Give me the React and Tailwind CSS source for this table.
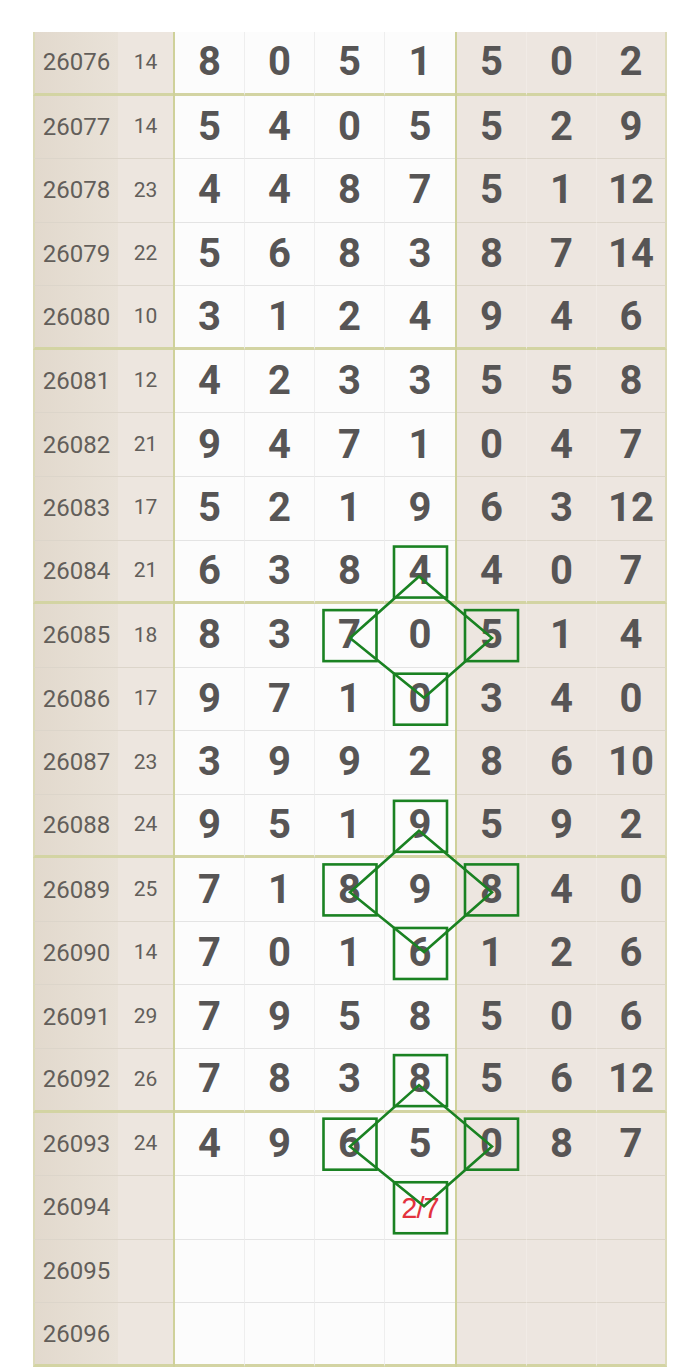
import React from "react";

const rows = [
  ["26076", "14", [8, 0, 5, 1], [5, 0, 2]],
  ["26077", "14", [5, 4, 0, 5], [5, 2, 9]],
  ["26078", "23", [4, 4, 8, 7], [5, 1, 12]],
  ["26079", "22", [5, 6, 8, 3], [8, 7, 14]],
  ["26080", "10", [3, 1, 2, 4], [9, 4, 6]],
  ["26081", "12", [4, 2, 3, 3], [5, 5, 8]],
  ["26082", "21", [9, 4, 7, 1], [0, 4, 7]],
  ["26083", "17", [5, 2, 1, 9], [6, 3, 12]],
  ["26084", "21", [6, 3, 8, 4], [4, 0, 7]],
  ["26085", "18", [8, 3, 7, 0], [5, 1, 4]],
  ["26086", "17", [9, 7, 1, 0], [3, 4, 0]],
  ["26087", "23", [3, 9, 9, 2], [8, 6, 10]],
  ["26088", "24", [9, 5, 1, 9], [5, 9, 2]],
  ["26089", "25", [7, 1, 8, 9], [8, 4, 0]],
  ["26090", "14", [7, 0, 1, 6], [1, 2, 6]],
  ["26091", "29", [7, 9, 5, 8], [5, 0, 6]],
  ["26092", "26", [7, 8, 3, 8], [5, 6, 12]],
  ["26093", "24", [4, 9, 6, 5], [0, 8, 7]],
  ["26094", "", null, null],
  ["26095", "", null, null],
  ["26096", "", null, null],
];

const groupEnds = ["26076", "26080", "26084", "26088", "26092", "26096"];

const ROW_H = 63.57;
const TOP = 32;

// centre rows of the green diamonds (index into rows)
const diamonds = [9, 13, 17];

const Row = ({ period, sum, left, right }) => {
  const end = groupEnds.includes(period);
  const beigeLine = end ? "border-b-[3px] border-[#d3d4a3]" : "border-b border-[#dcd5ca]";
  const whiteLine = end ? "border-b-[3px] border-[#d3d4a3]" : "border-b border-[#e4e4e4]";
  return (
    <div className="flex h-[63.57px]">
      <div
        className={`w-[85px] flex items-center justify-center border-l-2 border-l-[#dcdab8] bg-gradient-to-r from-[#e2d9cd] to-[#e9e2d8] text-[24px] text-[#625e5a] ${beigeLine}`}
      >
        {period}
      </div>
      <div className={`w-[55px] flex items-center justify-center bg-[#ede6df] text-[21px] text-[#625e5a] ${beigeLine}`}>
        {sum}
      </div>
      <div className="w-[2px] bg-[#cfd19a]" />
      {[0, 1, 2, 3].map((c) => (
        <div
          key={c}
          className={`w-[70px] flex items-center justify-center bg-[#fcfcfc] text-[40px] font-bold text-[#575555] ${c < 3 ? "border-r border-r-[#eeeeee]" : ""} ${whiteLine}`}
        >
          {left ? left[c] : ""}
        </div>
      ))}
      <div className="w-[2px] bg-[#cfd19a]" />
      {[0, 1, 2].map((c) => (
        <div
          key={c}
          className={`w-[70px] flex items-center justify-center bg-[#ede6e0] text-[40px] font-bold text-[#575555] ${c < 2 ? "border-r border-r-[#f1ebe6]" : "border-r-2 border-r-[#dcdab8]"} ${beigeLine}`}
        >
          {right ? right[c] : ""}
        </div>
      ))}
    </div>
  );
};

const Diamond = ({ idx }) => {
  const rowTop = TOP + idx * ROW_H;
  const upTop = rowTop - ROW_H;
  const downTop = rowTop + ROW_H;
  const boxes = [
    { x: 394, y: upTop + 6 },
    { x: 323.5, y: rowTop + 6 },
    { x: 465, y: rowTop + 6 },
    { x: 394, y: downTop + 6 },
  ];
  const cy = rowTop + ROW_H / 2 + 2;
  const pts = [
    [419, upTop + 36],
    [350, cy],
    [424, downTop + 30],
    [492, cy],
  ];
  return (
    <g stroke="#1a8222" strokeWidth="2.6" fill="none">
      {boxes.map((b, i) => (
        <rect key={i} x={b.x} y={b.y} width="53" height="51" />
      ))}
      <polygon points={pts.map((p) => p.join(",")).join(" ")} />
    </g>
  );
};

export default function App() {
  return (
    <div className="relative w-[700px] h-[1367px] bg-white overflow-hidden" style={{ fontFamily: "Roboto, 'Noto Sans', sans-serif" }}>
      <div className="pt-[32px] pl-[33px]">
        {rows.map((r) => (
          <Row key={r[0]} period={r[0]} sum={r[1]} left={r[2]} right={r[3]} />
        ))}
      </div>
      <div
        className="absolute left-[385px] top-[1177px] w-[70px] h-[63px] flex items-center justify-center text-[29px] text-[#e3323d] tracking-[-1px]"
        style={{ fontFamily: "'Liberation Sans', Arial, sans-serif" }}
      >
        2/7
      </div>
      <svg className="absolute top-0 left-0 pointer-events-none" width="700" height="1367">
        {diamonds.map((d) => (
          <Diamond key={d} idx={d} />
        ))}
      </svg>
    </div>
  );
}
